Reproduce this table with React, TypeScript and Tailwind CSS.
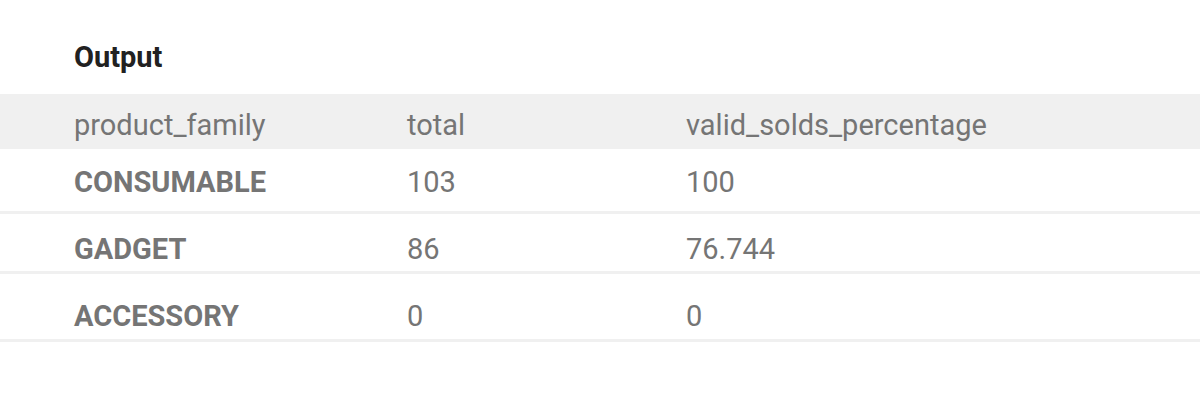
import React from "react";

const rows = [
  { name: "CONSUMABLE", total: "103", pct: "100", cls: "pt-[16px] pb-[12px]" },
  { name: "GADGET", total: "86", pct: "76.744", cls: "pt-[18px] pb-[5px]" },
  { name: "ACCESSORY", total: "0", pct: "0", cls: "pt-[25px] pb-[6px]" },
];

export default function App() {
  return (
    <div className="w-[1200px] h-[400px] bg-white font-['Roboto',sans-serif]">
      <div className="pt-[40px] pl-[74px] text-[29px] leading-[34px] font-bold text-[#212121]">Output</div>
      <div className="mt-[20px] flex bg-[#f0f0f0] pt-[14px] pb-[7px] text-[29px] leading-[34px] text-[#757575]">
        <div className="w-[333px] pl-[74px] box-content">product_family</div>
        <div className="w-[279px]">total</div>
        <div>valid_solds_percentage</div>
      </div>
      {rows.map((r) => (
        <div key={r.name} className={`flex border-b-[3px] border-[#f0f0f0] text-[29px] leading-[34px] text-[#757575] ${r.cls}`}>
          <div className="w-[333px] pl-[74px] box-content font-bold">{r.name}</div>
          <div className="w-[279px]">{r.total}</div>
          <div>{r.pct}</div>
        </div>
      ))}
    </div>
  );
}
